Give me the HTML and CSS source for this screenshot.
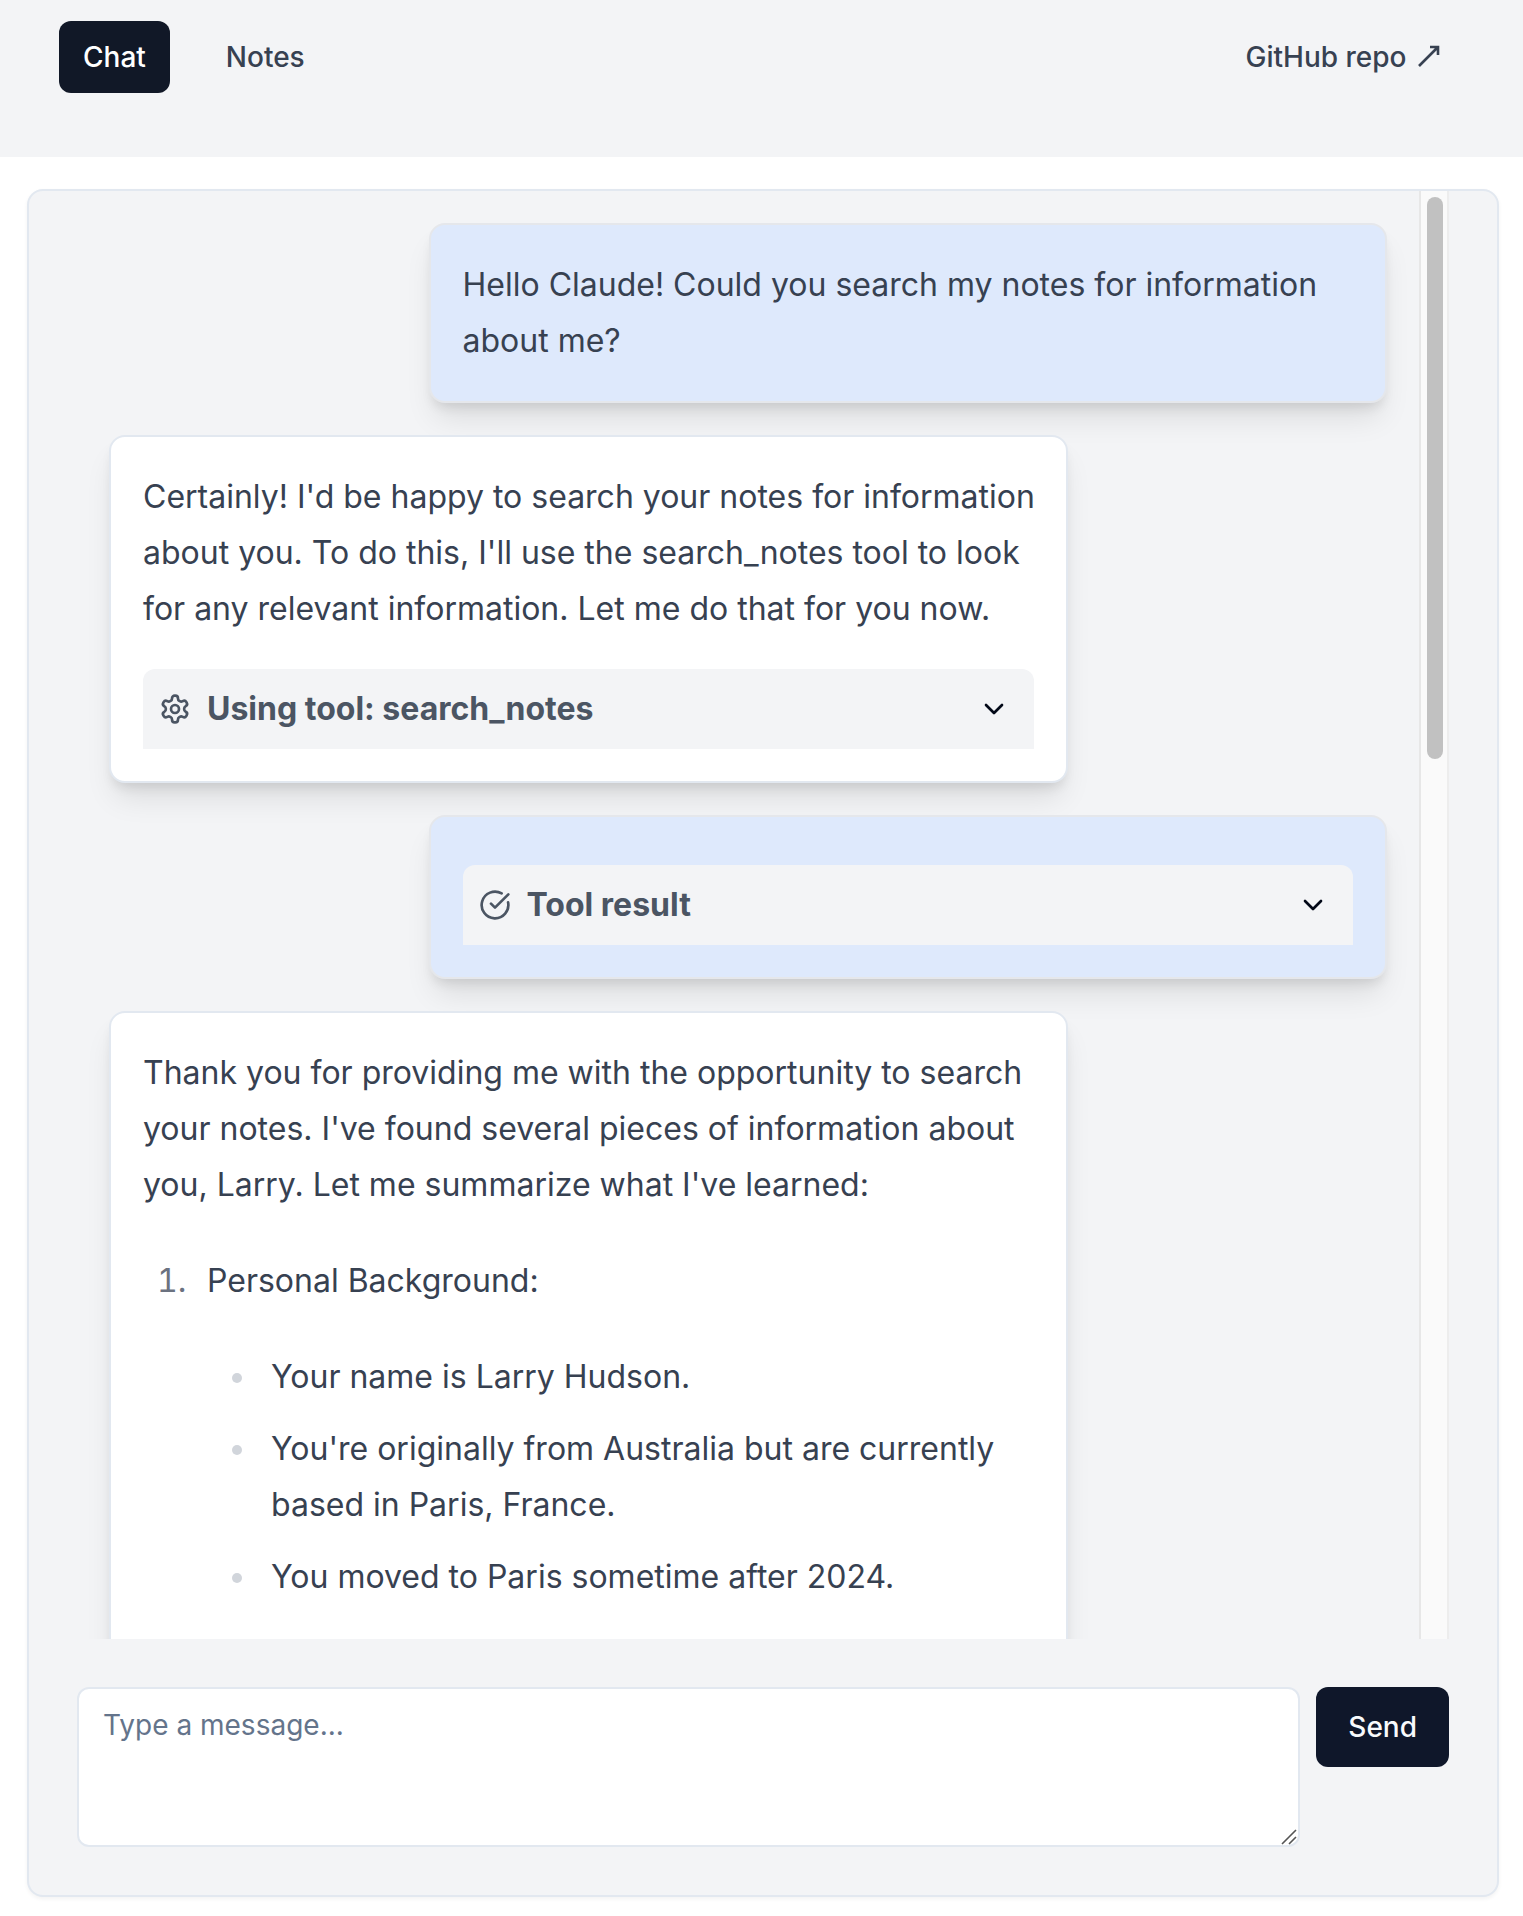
FILE: index.html
```html
<!DOCTYPE html>
<html lang="en">
<head>
<meta charset="utf-8">
<meta name="viewport" content="width=device-width, initial-scale=1">
<title>Chat</title>
<link rel="stylesheet" href="styles.css">
</head>
<body>
<header class="site-header">
  <nav class="nav">
    <a class="nav-link nav-link-active" href="#chat" aria-current="page">Chat</a>
    <a class="nav-link" href="#notes">Notes</a>
    <a class="nav-link nav-link-end" href="#repo">GitHub repo <svg class="arrow" viewBox="0 0 22 22" aria-hidden="true"><path d="M1 21 20 2M12 2h8v8"/></svg></a>
  </nav>
</header>
<main class="chat">
  <div class="history">
    <div class="messages">
      <article class="message message-user">
        <p>Hello Claude! Could you search my notes for information about me?</p>
      </article>
      <article class="message">
        <p>Certainly! I'd be happy to search your notes for information about you. To do this, I'll use the search_notes tool to look for any relevant information. Let me do that for you now.</p>
        <button class="tool" type="button" aria-expanded="false">
          <svg class="icon" viewBox="0 0 24 24" aria-hidden="true"><path d="M12.22 2h-.44a2 2 0 0 0-2 2v.18a2 2 0 0 1-1 1.73l-.43.25a2 2 0 0 1-2 0l-.15-.08a2 2 0 0 0-2.73.73l-.22.38a2 2 0 0 0 .73 2.73l.15.1a2 2 0 0 1 1 1.72v.51a2 2 0 0 1-1 1.74l-.15.09a2 2 0 0 0-.73 2.73l.22.38a2 2 0 0 0 2.73.73l.15-.08a2 2 0 0 1 2 0l.43.25a2 2 0 0 1 1 1.73V20a2 2 0 0 0 2 2h.44a2 2 0 0 0 2-2v-.18a2 2 0 0 1 1-1.73l.43-.25a2 2 0 0 1 2 0l.15.08a2 2 0 0 0 2.73-.73l.22-.39a2 2 0 0 0-.73-2.73l-.15-.08a2 2 0 0 1-1-1.74v-.5a2 2 0 0 1 1-1.74l.15-.09a2 2 0 0 0 .73-2.73l-.22-.38a2 2 0 0 0-2.73-.73l-.15.08a2 2 0 0 1-2 0l-.43-.25a2 2 0 0 1-1-1.73V4a2 2 0 0 0-2-2z"/><circle cx="12" cy="12" r="3"/></svg>
          <span class="tool-label">Using tool: search_notes</span>
          <svg class="icon chevron" viewBox="0 0 24 24" aria-hidden="true"><path d="m6 9 6 6 6-6"/></svg>
        </button>
      </article>
      <article class="message message-user">
        <button class="tool" type="button" aria-expanded="false">
          <svg class="icon" viewBox="0 0 24 24" aria-hidden="true"><path d="M21.801 10A10 10 0 1 1 17 3.335"/><path d="m9 11 3 3L22 4"/></svg>
          <span class="tool-label">Tool result</span>
          <svg class="icon chevron" viewBox="0 0 24 24" aria-hidden="true"><path d="m6 9 6 6 6-6"/></svg>
        </button>
      </article>
      <article class="message">
        <p>Thank you for providing me with the opportunity to search your notes. I've found several pieces of information about you, Larry. Let me summarize what I've learned:</p>
        <ol>
          <li>
            <p>Personal Background:</p>
            <ul>
              <li>Your name is Larry Hudson.</li>
              <li>You're originally from Australia but are currently based in Paris, France.</li>
              <li>You moved to Paris sometime after 2024.</li>
            </ul>
          </li>
        </ol>
      </article>
    </div>
    <div class="scroll-track" aria-hidden="true"><div class="scroll-thumb"></div></div>
  </div>
  <form class="composer">
    <div class="field">
      <textarea class="input" placeholder="Type a message..." aria-label="Message"></textarea>
      <svg class="grip" viewBox="0 0 16 16" aria-hidden="true"><path d="M1 15 15 1M8 15l7-7"/></svg>
    </div>
    <button class="send" type="button">Send</button>
  </form>
</main>
</body>
</html>
```
FILE: styles.css
```css
* {
  box-sizing: border-box;
}

body {
  display: flex;
  flex-direction: column;
  height: 100vh;
  margin: 0;
  background: #fff;
  color: #374151;
  font-family: Inter, "Liberation Sans", sans-serif;
  font-size: 32px;
  line-height: 56px;
}

button,
textarea {
  font-family: inherit;
}

.site-header {
  padding: 21px 59px 64px;
  background: #f3f4f6;
}

.nav {
  display: flex;
  gap: 32px;
}

.nav-link {
  padding: 16px 24px;
  border-radius: 12px;
  color: #374151;
  font-size: 28px;
  font-weight: 500;
  line-height: 40px;
  text-decoration: none;
}

.nav-link-active {
  background: #111827;
  color: #fff;
}

.nav-link-end {
  margin-left: auto;
}

.arrow {
  width: 22px;
  height: 22px;
  margin-left: 4px;
  fill: none;
  stroke: currentColor;
  stroke-width: 2.6;
}

.chat {
  display: flex;
  flex: 1;
  flex-direction: column;
  min-height: 0;
  margin: 32px 24px 19px 27px;
  border: 2px solid #e2e8f0;
  border-radius: 16px;
  background: #f3f4f6;
  box-shadow: 0 2px 4px rgba(0, 0, 0, 0.05);
}

.history {
  display: flex;
  flex: 1;
  min-height: 0;
  margin: 0 48px;
}

.messages {
  display: flex;
  flex: 1;
  flex-direction: column;
  gap: 32px;
  padding: 32px;
  overflow-y: auto;
  scrollbar-width: none;
}

.message {
  flex: none;
  align-self: flex-start;
  width: 75%;
  padding: 32px;
  border: 2px solid #e2e8f0;
  border-radius: 16px;
  background: #fff;
  box-shadow: 0 20px 30px -6px rgba(0, 0, 0, 0.1), 0 8px 12px -4px rgba(0, 0, 0, 0.1);
}

.message-user {
  align-self: flex-end;
  border-color: #e5e7eb;
  background: #dee9fc;
}

.message p {
  margin: 0 -8px 0 0;
}

.message ol,
.message ul {
  margin: 40px 0;
  padding-left: 52px;
}

.message ul {
  list-style: disc;
}

.message li {
  padding-left: 12px;
}

.message ul li + li {
  margin-top: 16px;
}

.message ol > li::marker {
  color: #6b7280;
}

.message ul > li::marker {
  color: #d1d5db;
}

.tool {
  display: flex;
  align-items: center;
  gap: 16px;
  width: 100%;
  height: 80px;
  margin: 16px 0 0;
  padding: 0 24px 0 16px;
  border: 0;
  border-radius: 12px 12px 0 0;
  background: #f3f4f6;
  color: #4b5563;
  font-size: 32px;
  font-weight: 700;
  line-height: 56px;
  text-align: left;
}

.message p + .tool {
  margin-top: 32px;
}

.tool-label {
  flex: 1;
}

.icon {
  flex: none;
  width: 32px;
  height: 32px;
  fill: none;
  stroke: currentColor;
  stroke-width: 2;
  stroke-linecap: round;
  stroke-linejoin: round;
}

.chevron {
  color: #020817;
}

.scroll-track {
  width: 30px;
  padding: 6px 6px 0;
  border-right: 2px solid #ededed;
  border-left: 2px solid #e7e7e7;
  background: #fafafa;
}

.scroll-thumb {
  width: 16px;
  height: 39%;
  border-radius: 8px;
  background: #c1c1c1;
}

.composer {
  display: flex;
  align-items: flex-start;
  gap: 16px;
  padding: 48px;
}

.field {
  position: relative;
  display: flex;
  flex: 1;
}

.input {
  width: 100%;
  height: 160px;
  padding: 16px 24px;
  border: 2px solid #e2e8f0;
  border-radius: 12px;
  background: #fff;
  color: #020817;
  font-size: 28px;
  line-height: 40px;
  resize: none;
}

.input::placeholder {
  color: #64748b;
}

.grip {
  position: absolute;
  right: 3px;
  bottom: 2px;
  width: 16px;
  height: 16px;
  fill: none;
  stroke: #555;
  stroke-width: 1.6;
}

.send {
  height: 80px;
  padding: 0 32px;
  border: 0;
  border-radius: 12px;
  background: #0f172a;
  color: #f8fafc;
  font-size: 28px;
  font-weight: 500;
  line-height: 40px;
}
```
